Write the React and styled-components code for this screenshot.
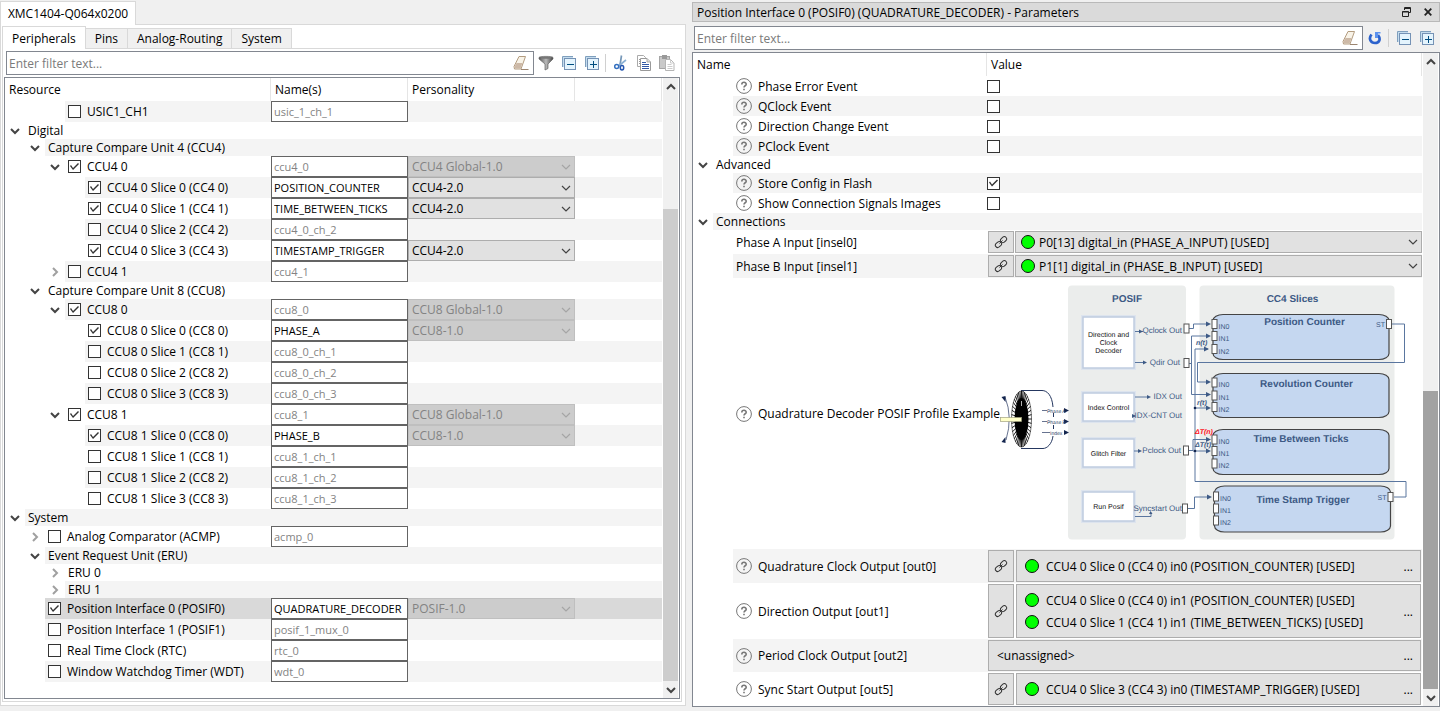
import React from "react";
import styled, { createGlobalStyle, css } from "styled-components";

const GlobalStyle = createGlobalStyle`
  * { box-sizing: border-box; }
  body {
    margin: 0;
    background: #f0f0f0;
    color: #000;
    font: 12px/17px "Open Sans", "Noto Sans", sans-serif;
  }
  input, select, button { font: inherit; color: inherit; margin: 0; padding: 0; border-radius: 0; }
  svg { display: block; flex: none; }
`;

/* ---------- page frame ---------- */

const Workspace = styled.main`
  display: grid;
  grid-template-columns: 686fr 754fr;
  align-items: start;
  white-space: nowrap;
`;

const ResourcePane = styled.section`
  padding-top: 1px;
  min-width: 0;
`;

const ParameterPane = styled.section`
  padding: 2px 0 4px 6px;
  min-width: 0;
`;

const DeviceTabs = styled.div`
  display: flex;
  height: 23px;
`;

const DeviceTab = styled.button`
  position: relative;
  z-index: 1;
  width: 136px;
  height: 24px;
  background: #fff;
  border: 1px solid #d9d9d9;
  border-bottom: 0;
`;

const DevicePanel = styled.div`
  background: #fff;
  border: 1px solid #d9d9d9;
  padding: 1px 3px 3px 1px;
`;

const ViewTabs = styled.div`
  display: flex;
  align-items: flex-end;
  height: 22px;
`;

const ViewTab = styled.button`
  height: ${(p) => (p.$active ? "23px" : "20px")};
  padding: 0 9px;
  border: 1px solid #d9d9d9;
  border-left-width: ${(p) => (p.$joined ? 0 : 1)}px;
  border-bottom: 0;
  background: ${(p) => (p.$active ? "#fff" : "#f0f0f0")};
  ${(p) => p.$active && css`
    position: relative;
    z-index: 1;
    align-self: flex-start;
  `}
`;

const ViewPanel = styled.div`
  border: 1px solid #d9d9d9;
  padding: 2px 1px 2px;
`;

const TitleBar = styled.header`
  display: flex;
  align-items: center;
  gap: 12px;
  height: 20px;
  padding: 0 7px 0 4px;
  background: #dadada;
  border: 1px solid #b9b9b9;
`;

const Title = styled.h1`
  flex: 1;
  margin: 0;
  font: inherit;
`;

/* ---------- toolbar ---------- */

const Toolbar = styled.div`
  display: flex;
  align-items: center;
  height: 24px;
  margin: ${(p) => (p.$flush ? "0 2px 2px 2px" : "4px 2px 2px 2px")};
`;

const FilterBox = styled.div`
  display: flex;
  align-items: center;
  flex: 1;
  height: 24px;
  padding: 0 4px 0 2px;
  background: #fff;
  border: 1px solid #828790;
`;

const FilterInput = styled.input`
  flex: 1;
  min-width: 0;
  border: 0;
  outline: 0;
  background: none;
  &::placeholder { color: #7a7a7a; opacity: 1; }
`;

const IconButton = styled.button`
  display: grid;
  place-items: center;
  width: 23px;
  height: 22px;
  background: none;
  border: 0;
`;

const BarButton = styled(IconButton)`
  width: 9px;
  height: 18px;
`;

const Separator = styled.span`
  width: 1px;
  height: 18px;
  margin: 0 3px 0 2px;
  background: #d0d0d0;
`;

/* ---------- tree tables ---------- */

const TreeBox = styled.div`
  display: flex;
  background: #fff;
  border: 1px solid #828790;
  padding-right: 1px;
`;

const TreeScroll = styled.div`
  flex: 1;
  min-width: 0;
  padding-bottom: ${(p) => (p.$tail ? "16px" : 0)};
  margin-right: 1px;
`;

const Table = styled.table`
  width: 100%;
  table-layout: fixed;
  border-collapse: separate;
  border-spacing: 0;
`;

const HeadCell = styled.th`
  width: ${(p) => (p.$width ? p.$width + "px" : "auto")};
  height: 23px;
  padding: 0 4px;
  text-align: left;
  font-weight: normal;
  border-right: 1px solid #e5e5e5;
`;

const Row = styled.tr`
  height: ${(p) => p.$height}px;
  --shade: ${(p) => (p.$selected ? "#d9d9d9" : p.$striped ? "#f4f4f4" : "#fff")};
`;

const Cell = styled.td`
  padding: 0;
  background: ${(p) => (p.$plain ? "none" : "var(--shade)")};
`;

const NameCell = styled.div`
  display: flex;
  align-items: center;
  height: ${(p) => p.$height}px;
  padding-left: ${(p) => p.$level * 20 - 15}px;
`;

const Twisty = styled.span`
  flex: none;
  width: 15px;
`;

const NameBody = styled.div`
  display: flex;
  align-items: center;
  flex: 1;
  min-width: 0;
  gap: 6px;
  height: 100%;
  padding-left: 3px;
  background: var(--shade);
`;

const Check = styled.input.attrs({ type: "checkbox" })`
  appearance: none;
  flex: none;
  display: block;
  width: 13px;
  height: 13px;
  background: #fff;
  border: 1px solid #333;
  &:checked::after {
    content: "";
    display: block;
    width: 11px;
    height: 11px;
    background: #333;
    clip-path: polygon(1px 5px, 2px 4px, 4px 7px, 9px 2px, 10px 3px, 4px 9px);
  }
`;

const NameInput = styled.input`
  display: block;
  width: 100%;
  height: 21px;
  padding: 0 2px;
  font-size: 11px;
  background: #fff;
  border: 1px solid #646464;
  outline: 0;
  &::placeholder { color: #838383; opacity: 1; }
`;

const SelectFrame = styled.div`
  position: relative;
  display: flex;
  align-items: center;
  flex: 1;
  gap: 4px;
  height: ${(p) => (p.$tall ? 22 : 21)}px;
  padding-left: ${(p) => (p.$tall ? 5 : 0)}px;
  color: ${(p) => (p.$off ? "#838383" : "#000")};
  background: ${(p) => (p.$off ? "#cccccc" : "#e1e1e1")};
  border: 1px solid ${(p) => (p.$off ? "#bfbfbf" : "#adadad")};
`;

const SelectControl = styled.select`
  appearance: none;
  flex: 1;
  min-width: 0;
  height: 19px;
  padding-left: ${(p) => (p.$tall ? 0 : 3)}px;
  border: 0;
  outline: 0;
  background: none;
  opacity: 1;
`;

const SelectArrow = styled.span`
  position: absolute;
  right: 3px;
  pointer-events: none;
`;

const ValueLine = styled.div`
  display: flex;
  align-items: center;
  gap: ${(p) => (p.$inset ? 2 : 1)}px;
  padding: 0 ${(p) => (p.$inset ? 1 : 0)}px 0 1px;
`;

const LinkButton = styled.button`
  display: grid;
  place-items: center;
  width: 26px;
  height: ${(p) => p.$height}px;
  background: #e1e1e1;
  border: 1px solid #adadad;
`;

const SignalButton = styled.button`
  display: flex;
  align-items: center;
  justify-content: space-between;
  flex: 1;
  height: ${(p) => p.$height}px;
  padding: 0 7px 0 8px;
  text-align: left;
  background: #e1e1e1;
  border: 1px solid #adadad;
`;

const SignalList = styled.span`
  display: grid;
  gap: 5px;
`;

const Signal = styled.span`
  display: flex;
  align-items: center;
  gap: 7px;
`;

const Dot = styled.span`
  flex: none;
  width: 14px;
  height: 14px;
  border: 1px solid #111;
  border-radius: 50%;
  background: #00ff00;
`;

const ScrollBar = styled.div`
  display: flex;
  flex-direction: column;
  width: 15px;
  background: #f0f0f0;
`;

const ScrollArrow = styled.button`
  display: grid;
  place-items: center;
  height: 17px;
  border: 0;
  background: none;
`;

const ScrollGap = styled.span`
  flex: ${(p) => p.$size};
`;

const ScrollThumb = styled.span`
  flex: ${(p) => p.$size};
  background: ${(p) => (p.$dark ? "#a2a2a2" : "#cdcdcd")};
`;

/* ---------- icons ---------- */

const chevrons = {
  down: "M1 3l4 4 4-4",
  up: "M1 7l4-4 4 4",
  right: "M3 1l4 4-4 4",
};

const Chevron = ({ dir = "down", color = "#444", width = 2 }) => (
  <svg width="10" height="10" viewBox="0 0 10 10" fill="none" stroke={color} strokeWidth={width}>
    <path d={chevrons[dir]} />
  </svg>
);

const EraserIcon = () => (
  <svg width="16" height="16" viewBox="0 0 16 16">
    <path d="M6 1.500h6.500L8 14H1.500L1 11.500z" fill="#f8f3e8" stroke="#b39c80" />
    <path d="M3.500 8H9.500L7.500 13.500H2L1.500 11.500z" fill="#cdb9a7" />
    <path d="M8 14.500h7.500" stroke="#9b8570" />
  </svg>
);

const FunnelIcon = () => (
  <svg width="16" height="16" viewBox="0 0 16 16">
    <defs>
      <linearGradient id="funnel"><stop stopColor="#555" /><stop offset=".5" stopColor="#bbb" /><stop offset="1" stopColor="#444" /></linearGradient>
    </defs>
    <path d="M1 2.500C1 1 15 1 15 2.500V4L10 9v4.500L7 15V9L1 4z" fill="url(#funnel)" stroke="#666" strokeWidth=".7" />
    <ellipse cx="8" cy="2.800" rx="5.500" ry="1" fill="#777" />
  </svg>
);

const StackIcon = ({ plus }) => (
  <svg width="14" height="14" viewBox="0 0 14 14">
    <path d="M.5 11V.5H11" fill="none" stroke="#7f9fbd" />
    <path d="M1 1h10v2H3v8H1z" fill="#c4dcee" />
    <rect x="2.500" y="2.500" width="11" height="11" fill="#e4f4fd" stroke="#7592b5" />
    <path d={plus ? "M5 8.500h7M8.500 5v7" : "M5 8.500h7"} stroke="#004d80" />
  </svg>
);

const ScissorsIcon = () => (
  <svg width="15" height="16" viewBox="0 0 15 16" fill="none">
    <path d="M8.500.5L7 10" stroke="#7597b8" strokeWidth="1.700" />
    <path d="M13 5L5.500 11" stroke="#8ab0d4" strokeWidth="1.700" />
    <circle cx="3.700" cy="11.500" r="2" stroke="#3470c0" strokeWidth="1.500" />
    <ellipse cx="9" cy="12.800" rx="1.700" ry="2.200" stroke="#2456b0" strokeWidth="1.500" />
  </svg>
);

const CopyIcon = () => (
  <svg width="16" height="16" viewBox="0 0 16 16">
    <path d="M1.500.5h6l2 2v9h-8z" fill="#fff" stroke="#aaa" />
    <path d="M3 4.500h2M3 6.500h2M3 8.500h2" stroke="#999" />
    <path d="M4.500 3.500h6.500l3.500 3.500v8.500h-10z" fill="#fff" stroke="#999" />
    <path d="M11 3.500v3.500h3.500" fill="#ddd" stroke="#aaa" />
    <path d="M6 7.500h4M6 9.500h7M6 11.500h7M6 13.500h7" stroke="#3157a5" />
  </svg>
);

const PasteIcon = () => (
  <svg width="16" height="16" viewBox="0 0 16 16">
    <rect x=".5" y="1.500" width="10" height="12" fill="#c9c9c9" stroke="#a5a5a5" />
    <rect x="3" y="0" width="5" height="4" fill="#999" />
    <path d="M6.500 4.500h5l3.500 3.500v7.500H6.500z" fill="#fff" stroke="#b5b5b5" />
    <path d="M11.500 4.500V8H15M8.500 9.500h4M8.500 11.500h5M8.500 13.500h5" fill="none" stroke="#ccc" />
  </svg>
);

const ResetIcon = () => (
  <svg width="14" height="14" viewBox="0 0 14 14" fill="none">
    <path d="M3.500 3.500C0 8 3 12 7 12C11.500 12 13 8 10 4" stroke="#2c62cc" strokeWidth="2.700" />
    <path d="M7 1h5.500v1.500H10v4.500H7z" fill="#5c92ee" />
  </svg>
);

const RestoreIcon = () => (
  <svg width="9" height="10" viewBox="0 0 9 10" fill="none" stroke="#222">
    <path d="M2.500 3V.5h6v5H6.500M2.500 1.500h6" />
    <path d="M.5 4.500h6v5h-6zM.5 5h6" />
  </svg>
);

const CloseIcon = () => (
  <svg width="8" height="8" viewBox="0 0 8 8" stroke="#222" strokeWidth="1.800">
    <path d="M.7.7l6.600 6.600M7.300.7L.7 7.300" />
  </svg>
);

const HelpIcon = () => (
  <svg width="16" height="16" viewBox="0 0 16 16" fill="none" stroke="#777">
    <circle cx="8" cy="8" r="7.400" />
    <path d="M5.800 6.500C5.800 3.400 10.300 3.700 10.200 6.200C10.200 7.800 8 7.700 8 9.500M8 10.700v1.500" strokeWidth="1.600" />
  </svg>
);

const ChainIcon = () => (
  <svg width="14" height="14" viewBox="0 0 14 14" fill="none" stroke="#333">
    <rect x="6.200" y="2.200" width="6.600" height="4.600" rx="2.300" transform="rotate(-40 9.700 4.500)" />
    <rect x="1.200" y="7.400" width="6.600" height="4.600" rx="2.300" transform="rotate(-40 4.300 9.700)" />
    <path d="M5.500 8.500l3-3" />
  </svg>
);

/* ---------- quadrature decoder diagram ---------- */

const Diagram = styled.svg`
  margin-left: 1px;
  font-family: "Liberation Sans", sans-serif;
  text-rendering: geometricPrecision;
`;

const INK = "#3d5a85";

const Arrow = ({ x, y, s = 5 }) => <path d={`M${x - s} ${y - s / 2}L${x} ${y}L${x - s} ${y + s / 2}z`} fill={INK} />;

const Port = ({ x, y }) => <rect x={x} y={y - 4.5} width="5" height="9" fill="#fff" stroke="#555" />;

const Stage = ({ y, h, lines }) => (
  <g>
    <rect x="1083" y={y} width="51" height={h} fill="#fff" stroke="#dde4ee" strokeWidth="4" />
    <rect x="1083" y={y} width="51" height={h} fill="#fff" stroke="#bfcce0" strokeWidth="1.500" />
    {lines.map((t, i) => (
      <text key={t} x="1108.500" y={y + h / 2 + 2.500 + (i - (lines.length - 1) / 2) * 8.300} fontSize="7" textAnchor="middle" fill="#111">{t}</text>
    ))}
  </g>
);

const Slice = ({ x = 1213, y, h, title, cx, ty, ports, st }) => (
  <g>
    <rect x={x} y={y} width="176" height={h} rx="10" ry="6" fill="#c5d7f0" stroke="#444" strokeWidth="1.200" />
    <text x={cx} y={ty} fontSize="10" fontWeight="bold" textAnchor="middle" fill={INK}>{title}</text>
    {ports.map((p, i) => (
      <g key={p}>
        <Port x={x - 1} y={p} />
        <text x={x + 5.500} y={p + 4.500} fontSize="7" fill={INK}>{"IN" + i}</text>
      </g>
    ))}
    {st && (
      <g>
        <Port x={x + 173.500} y={st} />
        <text x={x + 163} y={st + 3} fontSize="7" fill={INK}>ST</text>
      </g>
    )}
  </g>
);

const OUTS = [
  ["Qclock Out", 1182, 333], ["Qdir Out", 1180, 365], ["IDX Out", 1182, 399],
  ["IDX-CNT Out", 1182, 418], ["Pclock Out", 1181, 453], ["Syncstart Out", 1182, 511],
];

const spokes = Array.from({ length: 40 }, (_, i) => {
  const a = (i / 40) * Math.PI * 2;
  const c = Math.cos(a), s = Math.sin(a);
  return `M${1021.5 + 6 * c} ${419 + 20 * s}L${1021.5 + 10 * c} ${419 + 28 * s}`;
}).join("");

const DecoderDiagram = () => (
  <Diagram width="422" height="262" viewBox="988 283 422 262" role="img" aria-label="Quadrature decoder block diagram">
    <rect x="1068" y="285.500" width="118" height="254" rx="4" fill="#ebedec" />
    <rect x="1199.500" y="285.500" width="195" height="254" rx="4" fill="#ebedec" />
    <text x="1127" y="301.500" fontSize="10" fontWeight="bold" textAnchor="middle" fill={INK}>POSIF</text>
    <text x="1292.500" y="301.500" fontSize="10" fontWeight="bold" textAnchor="middle" fill={INK}>CC4 Slices</text>

    <g fill="none" stroke="#253760">
      <path d="M1021 390.500H1042C1047 390.500 1052 395 1053 407M1053.500 413v4M1053.500 425v4M1053 436C1052 444 1047 448.500 1043 448.500H1021" />
      <path d="M1005 397Q1013 417 1006 440M1042 410.500h5M1042 421.500h5M1042 432.500h8" strokeWidth=".7" />
    </g>
    <ellipse cx="1021.500" cy="419" rx="10" ry="28" fill="#fff" stroke="#333" strokeWidth=".7" />
    <path d={spokes} stroke="#000" strokeWidth=".9" />
    <ellipse cx="1021.500" cy="419" rx="7" ry="21" fill="#000" />
    <path d="M1021.500 401v5" stroke="#fff" strokeWidth=".7" />
    <rect x="1000.500" y="417.500" width="21" height="4" fill="#ffffc8" stroke="#a3a380" strokeWidth=".7" />
    <path d="M1001.500 397l4-1 0 6zM1001.500 442l4-5 0 6zM1064 408l5 2.500-5 2.500zM1064 419l5 2.500-5 2.500zM1064 430l5 2.500-5 2.500z" fill="#14264f" />
    <g fontSize="5" fill="#2a3d63">
      <text x="1047" y="412.500">Phase A</text>
      <text x="1047" y="423.500">Phase B</text>
      <text x="1050" y="434.500">Index</text>
    </g>

    <Stage y={317} h={51} lines={["Direction and", "Clock", "Decoder"]} />
    <Stage y={393} h={28} lines={["Index Control"]} />
    <Stage y={439} h={28} lines={["Glitch Filter"]} />
    <Stage y={492} h={29} lines={["Run Posif"]} />

    <Slice y={314.5} h={45} title="Position Counter" cx={1304.5} ty={325} ports={[324, 336, 349]} st={324} />
    <Slice y={373.5} h={44} title="Revolution Counter" cx={1306.5} ty={386.5} ports={[382.5, 395.5, 407]} />
    <Slice y={429.5} h={45} title="Time Between Ticks" cx={1301} ty={442} ports={[439.5, 451, 463.5]} />
    <Slice x={1214.5} y={486} h={46} title="Time Stamp Trigger" cx={1303} ty={502.5} ports={[496.5, 508.5, 520.5]} st={497} />

    <g fill="none" stroke="#5a769f">
      <path d="M1189 328.500h4.500v-4.500h15M1189 363.500h2.500M1208 336H1191.500V394.500H1208" />
      <path d="M1392 324h12.500v38.500H1197.500V382H1208M1208 349H1195V481.500H1406V497H1394" />
      <path d="M1195 408h13M1189 450.500h4V439.500h15M1193 451h15M1187 508.500h7.500V497h15" />
      <path d="M1135 331.500h8M1135 362.500h8M1135 397h12M1134 416h1M1134 451h4M1135 516.500h16v-4" />
    </g>
    {[[1211, 324], [1211, 336], [1209, 349], [1211, 382], [1211, 394.5], [1211, 408], [1211, 439.5], [1211, 451], [1212, 497]].map(([x, y]) => <Arrow key={y} x={x} y={y} />)}
    {[[1143, 331.5], [1147, 362.5], [1151, 397], [1136, 416], [1142, 451]].map(([x, y]) => <Arrow key={y} x={x} y={y} s={4} />)}
    <path d="M1149 514l1.500-3 2 3z" fill={INK} />
    <circle cx="1195" cy="408" r="1.300" fill="#14264f" />
    <circle cx="1195" cy="451" r="1.300" fill="#14264f" />
    <Port x={1184} y={328.5} />
    <Port x={1184} y={363} />
    <Port x={1183.5} y={450.5} />
    <Port x={1182.5} y={508.5} />
    {OUTS.map(([t, x, y]) => <text key={t} x={x} y={y} fontSize="8" textAnchor="end" fill={INK}>{t}</text>)}
    <g fontSize="7" fontWeight="bold" fontStyle="italic" fill={INK}>
      <text x="1196" y="345">n(t)</text>
      <text x="1197" y="404.500">r(t)</text>
      <text x="1195" y="433.500" fill="#ff1020">ΔT(n)</text>
      <text x="1195" y="447">ΔT(t)</text>
    </g>
  </Diagram>
);

/* ---------- data ---------- */

/* open: true / false draws an arrow; check: tick state; name: edited text; hint: default name */
const RESOURCES = [
  { label: "USIC1_CH1", level: 3, check: false, hint: "usic_1_ch_1" },
  { label: "Digital", level: 1, open: true },
  { label: "Capture Compare Unit 4 (CCU4)", level: 2, open: true },
  { label: "CCU4 0", level: 3, open: true, check: true, hint: "ccu4_0", kind: "CCU4 Global-1.0", off: true },
  { label: "CCU4 0 Slice 0 (CC4 0)", level: 4, check: true, name: "POSITION_COUNTER", kind: "CCU4-2.0" },
  { label: "CCU4 0 Slice 1 (CC4 1)", level: 4, check: true, name: "TIME_BETWEEN_TICKS", kind: "CCU4-2.0" },
  { label: "CCU4 0 Slice 2 (CC4 2)", level: 4, check: false, hint: "ccu4_0_ch_2" },
  { label: "CCU4 0 Slice 3 (CC4 3)", level: 4, check: true, name: "TIMESTAMP_TRIGGER", kind: "CCU4-2.0" },
  { label: "CCU4 1", level: 3, open: false, check: false, hint: "ccu4_1" },
  { label: "Capture Compare Unit 8 (CCU8)", level: 2, open: true },
  { label: "CCU8 0", level: 3, open: true, check: true, hint: "ccu8_0", kind: "CCU8 Global-1.0", off: true },
  { label: "CCU8 0 Slice 0 (CC8 0)", level: 4, check: true, name: "PHASE_A", kind: "CCU8-1.0", off: true },
  { label: "CCU8 0 Slice 1 (CC8 1)", level: 4, check: false, hint: "ccu8_0_ch_1" },
  { label: "CCU8 0 Slice 2 (CC8 2)", level: 4, check: false, hint: "ccu8_0_ch_2" },
  { label: "CCU8 0 Slice 3 (CC8 3)", level: 4, check: false, hint: "ccu8_0_ch_3" },
  { label: "CCU8 1", level: 3, open: true, check: true, hint: "ccu8_1", kind: "CCU8 Global-1.0", off: true },
  { label: "CCU8 1 Slice 0 (CC8 0)", level: 4, check: true, name: "PHASE_B", kind: "CCU8-1.0", off: true },
  { label: "CCU8 1 Slice 1 (CC8 1)", level: 4, check: false, hint: "ccu8_1_ch_1" },
  { label: "CCU8 1 Slice 2 (CC8 2)", level: 4, check: false, hint: "ccu8_1_ch_2" },
  { label: "CCU8 1 Slice 3 (CC8 3)", level: 4, check: false, hint: "ccu8_1_ch_3" },
  { label: "System", level: 1, open: true },
  { label: "Analog Comparator (ACMP)", level: 2, open: false, check: false, hint: "acmp_0" },
  { label: "Event Request Unit (ERU)", level: 2, open: true },
  { label: "ERU 0", level: 3, open: false },
  { label: "ERU 1", level: 3, open: false },
  { label: "Position Interface 0 (POSIF0)", level: 2, check: true, name: "QUADRATURE_DECODER", kind: "POSIF-1.0", off: true, selected: true },
  { label: "Position Interface 1 (POSIF1)", level: 2, check: false, hint: "posif_1_mux_0" },
  { label: "Real Time Clock (RTC)", level: 2, check: false, hint: "rtc_0" },
  { label: "Window Watchdog Timer (WDT)", level: 2, check: false, hint: "wdt_0" },
];

const PARAMETERS = [
  { label: "Phase Error Event", height: 20, help: true, check: false },
  { label: "QClock Event", height: 20, help: true, check: false },
  { label: "Direction Change Event", height: 20, help: true, check: false },
  { label: "PClock Event", height: 20, help: true, check: false },
  { label: "Advanced", height: 17, group: true },
  { label: "Store Config in Flash", height: 20, help: true, check: true },
  { label: "Show Connection Signals Images", height: 20, help: true, check: false },
  { label: "Connections", height: 17, group: true },
  { label: "Phase A Input [insel0]", height: 24, select: "P0[13] digital_in (PHASE_A_INPUT) [USED]" },
  { label: "Phase B Input [insel1]", height: 24, select: "P1[1] digital_in (PHASE_B_INPUT) [USED]" },
  { label: "Quadrature Decoder POSIF Profile Example", height: 271, help: true, diagram: true },
  { label: "Quadrature Clock Output [out0]", height: 34, help: true, signals: ["CCU4 0 Slice 0 (CC4 0) in0 (POSITION_COUNTER) [USED]"] },
  { label: "Direction Output [out1]", height: 56, help: true, signals: ["CCU4 0 Slice 0 (CC4 0) in1 (POSITION_COUNTER) [USED]", "CCU4 0 Slice 1 (CC4 1) in1 (TIME_BETWEEN_TICKS) [USED]"] },
  { label: "Period Clock Output [out2]", height: 33, help: true, signals: [] },
  { label: "Sync Start Output [out5]", height: 34, help: true, signals: ["CCU4 0 Slice 3 (CC4 3) in0 (TIMESTAMP_TRIGGER) [USED]"] },
];

/* ---------- composed parts ---------- */

const Dropdown = ({ id, text, label, off, dot }) => (
  <SelectFrame $off={off} $tall={dot}>
    {dot && <Dot />}
    <SelectControl id={id} aria-label={label} disabled={off} $tall={dot}>
      <option>{text}</option>
    </SelectControl>
    <SelectArrow><Chevron color={off ? "#a5a5a5" : "#444"} width={1.2} /></SelectArrow>
  </SelectFrame>
);

const TreeName = ({ row, level, height, id, children }) => (
  <NameCell $height={height} $level={level}>
    <Twisty>
      {row.open !== undefined && <Chevron dir={row.open ? "down" : "right"} color={row.open ? "#444" : "#a0a0a0"} />}
    </Twisty>
    <NameBody>
      {children}
      {id ? <label htmlFor={id}>{row.label}</label> : <span>{row.label}</span>}
    </NameBody>
  </NameCell>
);

const ResourceRow = ({ row, index }) => {
  const hasCheck = row.check !== undefined;
  const height = hasCheck ? 21 : 17;
  const id = hasCheck ? "res-" + index : undefined;
  return (
    <Row $height={height} $striped={index % 2 === 0} $selected={row.selected}>
      <Cell $plain>
        <TreeName row={row} level={row.level} height={height} id={id}>
          {hasCheck && <Check id={id} defaultChecked={row.check} />}
        </TreeName>
      </Cell>
      <Cell>{hasCheck && <NameInput aria-label={row.label + " name"} defaultValue={row.name} placeholder={row.hint} />}</Cell>
      <Cell>{row.kind && <Dropdown text={row.kind} label={row.label + " personality"} off={row.off} />}</Cell>
      <Cell />
    </Row>
  );
};

const ParameterValue = ({ row, id }) => {
  if (row.check !== undefined) return <Check id={id} defaultChecked={row.check} />;
  if (row.diagram) return <DecoderDiagram />;
  if (row.select) {
    return (
      <ValueLine>
        <LinkButton $height={22} aria-label={"Go to " + row.label}><ChainIcon /></LinkButton>
        <Dropdown id={id} text={row.select} dot />
      </ValueLine>
    );
  }
  if (row.signals) {
    const h = row.height - 2;
    return (
      <ValueLine $inset>
        {row.signals.length > 0 && <LinkButton $height={h} aria-label={"Go to " + row.label}><ChainIcon /></LinkButton>}
        <SignalButton id={id} $height={h}>
          <SignalList>
            {row.signals.length ? row.signals.map((s) => <Signal key={s}><Dot />{s}</Signal>) : "<unassigned>"}
          </SignalList>
          <span>...</span>
        </SignalButton>
      </ValueLine>
    );
  }
  return null;
};

const ParameterRow = ({ row, index }) => {
  const id = row.group || row.diagram ? undefined : "par-" + index;
  return (
    <Row $height={row.height} $striped={index % 2 === 1}>
      <Cell $plain>
        <TreeName row={row.group ? { ...row, open: true } : row} level={row.group ? 1 : 2} height={row.height} id={id}>
          {row.help && <HelpIcon />}
        </TreeName>
      </Cell>
      <Cell><ParameterValue row={row} id={id} /></Cell>
    </Row>
  );
};

const Scroll = ({ before, thumb, dark }) => (
  <ScrollBar>
    <ScrollArrow aria-label="Scroll up"><Chevron dir="up" /></ScrollArrow>
    <ScrollGap $size={before} />
    <ScrollThumb $size={thumb} $dark={dark} />
    <ScrollArrow aria-label="Scroll down"><Chevron /></ScrollArrow>
  </ScrollBar>
);

const Filter = ({ label }) => (
  <FilterBox>
    <FilterInput aria-label={label} placeholder="Enter filter text..." />
    <EraserIcon />
  </FilterBox>
);

export default function App() {
  return (
    <>
      <GlobalStyle />
      <Workspace>
        <ResourcePane>
          <DeviceTabs><DeviceTab>XMC1404-Q064x0200</DeviceTab></DeviceTabs>
          <DevicePanel>
            <ViewTabs>
              <ViewTab $active>Peripherals</ViewTab>
              <ViewTab $joined>Pins</ViewTab>
              <ViewTab $joined>Analog-Routing</ViewTab>
              <ViewTab $joined>System</ViewTab>
            </ViewTabs>
            <ViewPanel>
              <Toolbar $flush>
                <Filter label="Filter resources" />
                <IconButton aria-label="Filter"><FunnelIcon /></IconButton>
                <IconButton aria-label="Collapse all"><StackIcon /></IconButton>
                <IconButton aria-label="Expand all"><StackIcon plus /></IconButton>
                <Separator />
                <IconButton aria-label="Cut"><ScissorsIcon /></IconButton>
                <IconButton aria-label="Copy"><CopyIcon /></IconButton>
                <IconButton aria-label="Paste"><PasteIcon /></IconButton>
              </Toolbar>
              <TreeBox>
                <TreeScroll $tail>
                  <Table>
                    <thead>
                      <tr>
                        <HeadCell $width={266}>Resource</HeadCell>
                        <HeadCell $width={137}>Name(s)</HeadCell>
                        <HeadCell $width={167}>Personality</HeadCell>
                        <HeadCell />
                      </tr>
                    </thead>
                    <tbody>
                      {RESOURCES.map((row, i) => <ResourceRow key={row.label} row={row} index={i} />)}
                    </tbody>
                  </Table>
                </TreeScroll>
                <Scroll before={114} thumb={472} />
              </TreeBox>
            </ViewPanel>
          </DevicePanel>
        </ResourcePane>

        <ParameterPane>
          <TitleBar>
            <Title>Position Interface 0 (POSIF0) (QUADRATURE_DECODER) - Parameters</Title>
            <BarButton aria-label="Restore"><RestoreIcon /></BarButton>
            <BarButton aria-label="Close"><CloseIcon /></BarButton>
          </TitleBar>
          <Toolbar>
            <Filter label="Filter parameters" />
            <IconButton aria-label="Reset"><ResetIcon /></IconButton>
            <Separator />
            <IconButton aria-label="Collapse all"><StackIcon /></IconButton>
            <IconButton aria-label="Expand all"><StackIcon plus /></IconButton>
          </Toolbar>
          <TreeBox>
            <TreeScroll>
              <Table>
                <thead>
                  <tr>
                    <HeadCell $width={294}>Name</HeadCell>
                    <HeadCell>Value</HeadCell>
                  </tr>
                </thead>
                <tbody>
                  {PARAMETERS.map((row, i) => <ParameterRow key={row.label} row={row} index={i} />)}
                </tbody>
              </Table>
            </TreeScroll>
            <Scroll before={320} thumb={298} dark />
          </TreeBox>
        </ParameterPane>
      </Workspace>
    </>
  );
}
